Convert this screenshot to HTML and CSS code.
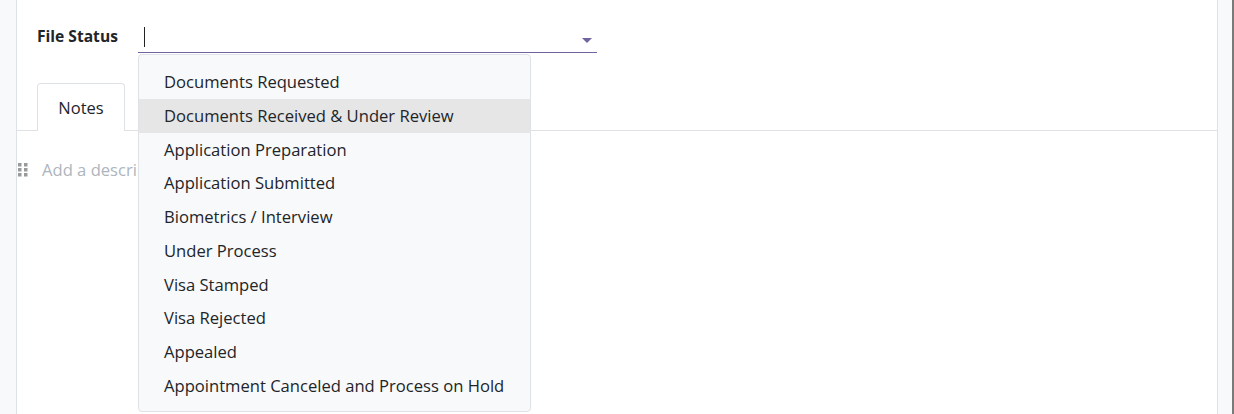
FILE: index.html
```html
<!DOCTYPE html>
<html lang="en">
<head>
<meta charset="utf-8">
<title>File Status</title>
<link rel="stylesheet" href="styles.css">
</head>
<body>
<div class="frame">
  <div class="gutter"></div>
  <div class="sheet">
    <div class="field-row">
      <label class="field-label">File Status</label>
      <div class="select">
        <span class="cursor"></span>
        <span class="caret"></span>
        <ul class="menu">
          <li class="item">Documents Requested</li>
          <li class="item active">Documents Received &amp; Under Review</li>
          <li class="item">Application Preparation</li>
          <li class="item">Application Submitted</li>
          <li class="item">Biometrics / Interview</li>
          <li class="item">Under Process</li>
          <li class="item">Visa Stamped</li>
          <li class="item">Visa Rejected</li>
          <li class="item">Appealed</li>
          <li class="item">Appointment Canceled and Process on Hold</li>
        </ul>
      </div>
    </div>
    <div class="tabs">
      <div class="tab">Notes</div>
    </div>
    <div class="notes">
      <svg class="handle" width="10" height="14" viewBox="0 0 10 14">
        <rect x="0" y="0" width="3.5" height="3.5" fill="#9a9a9a"/>
        <rect x="6" y="0" width="3.5" height="3.5" fill="#9a9a9a"/>
        <rect x="0" y="5" width="3.5" height="3.5" fill="#9a9a9a"/>
        <rect x="6" y="5" width="3.5" height="3.5" fill="#9a9a9a"/>
        <rect x="0" y="10" width="3.5" height="3.5" fill="#9a9a9a"/>
        <rect x="6" y="10" width="3.5" height="3.5" fill="#9a9a9a"/>
      </svg>
      <span class="placeholder">Add a description</span>
    </div>
  </div>
  <div class="gutter-right"></div>
  <div class="scrollbar"></div>
</div>
</body>
</html>
```
FILE: styles.css
```css
html, body {
  margin: 0;
  height: 100%;
}
body {
  background: #f8f9fa;
  font-family: "Open Sans", "Noto Sans", sans-serif;
  color: #212529;
  font-size: 16px;
  overflow: hidden;
}
.frame {
  display: flex;
  height: 414px;
}
.gutter {
  width: 16px;
  flex: none;
}
.sheet {
  flex: none;
  width: 1200px;
  background: #fff;
  border-left: 1px solid #dee2e6;
  border-right: 1px solid #dee2e6;
}
.gutter-right {
  flex: 1;
}
.scrollbar {
  width: 2px;
  flex: none;
  background: #7a7a7a;
}
.field-row {
  display: flex;
  align-items: flex-start;
  padding: 22px 0 0 20px;
  height: 61px;
  box-sizing: border-box;
}
.field-label {
  font-weight: 700;
  font-size: 15.6px;
  width: 101px;
  line-height: 28px;
}
.select {
  position: relative;
  width: 459px;
  height: 30px;
  border-bottom: 1px solid #71639e;
}
.cursor {
  position: absolute;
  left: 6px;
  top: 5px;
  width: 1px;
  height: 20px;
  background: #222;
}
.caret {
  position: absolute;
  right: 5px;
  top: 16px;
  width: 0;
  height: 0;
  border-left: 5px solid transparent;
  border-right: 5px solid transparent;
  border-top: 5px solid #71639e;
}
.menu {
  position: absolute;
  left: 0;
  top: 32px;
  width: 393px;
  height: 358px;
  box-sizing: border-box;
  margin: 0;
  padding: 10px 0 0;
  list-style: none;
  background: #f8f9fa;
  border: 1px solid #dee2e6;
  border-radius: 4px;
  z-index: 10;
}
.item {
  height: 33.75px;
  line-height: 33.75px;
  padding-left: 25px;
  font-size: 16.6px;
  color: #212529;
  white-space: nowrap;
}
.item.active {
  background: #e6e6e6;
}
.tabs {
  display: flex;
  padding-left: 20px;
  border-bottom: 1px solid #dee2e6;
  height: 47px;
  margin-top: 22px;
}
.tab {
  width: 88px;
  height: 48px;
  box-sizing: border-box;
  border: 1px solid #dee2e6;
  border-bottom: none;
  border-radius: 4px 4px 0 0;
  background: #fff;
  text-align: center;
  line-height: 48px;
  font-size: 16.5px;
}
.notes {
  display: flex;
  align-items: center;
  gap: 14px;
  padding: 27px 0 0 1px;
}
.handle {
  flex: none;
}
.placeholder {
  color: #adb5bd;
  font-size: 16.6px;
}
```
